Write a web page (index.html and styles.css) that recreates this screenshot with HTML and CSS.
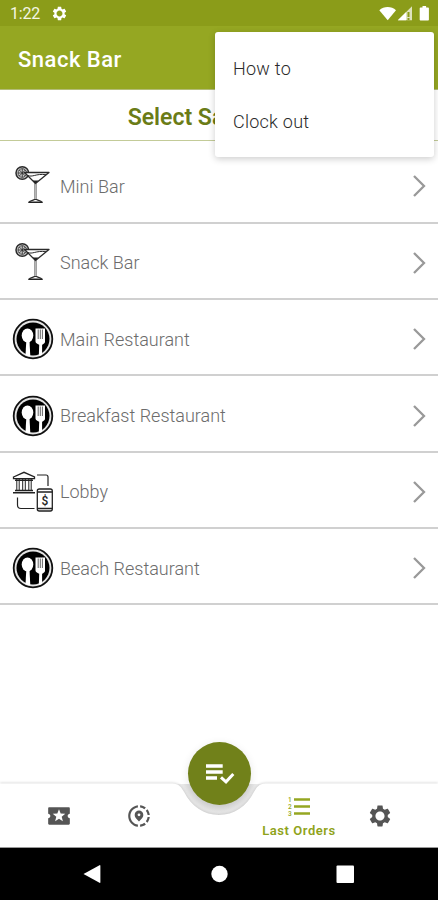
FILE: index.html
```html
<!DOCTYPE html>
<html lang="en">
<head>
<meta charset="utf-8">
<title>Snack Bar</title>
<link rel="stylesheet" href="styles.css">
</head>
<body>
<svg class="defs" width="0" height="0" aria-hidden="true">
  <symbol id="gear" viewBox="0 0 24 24"><path d="M19.14 12.94c.04-.3.06-.61.06-.94 0-.32-.02-.64-.07-.94l2.03-1.58c.18-.14.23-.41.12-.61l-1.92-3.32c-.12-.22-.37-.29-.59-.22l-2.39.96c-.5-.38-1.03-.7-1.62-.94l-.36-2.54c-.04-.24-.24-.41-.48-.41h-3.84c-.24 0-.43.17-.47.41l-.36 2.54c-.59.24-1.13.57-1.62.94l-2.39-.96c-.22-.08-.47 0-.59.22L2.74 8.87c-.12.21-.08.47.12.61l2.03 1.58c-.05.3-.09.63-.09.94s.02.64.07.94l-2.03 1.58c-.18.14-.23.41-.12.61l1.92 3.32c.12.22.37.29.59.22l2.39-.96c.5.38 1.03.7 1.62.94l.36 2.54c.05.24.24.41.48.41h3.84c.24 0 .44-.17.47-.41l.36-2.54c.59-.24 1.13-.56 1.62-.94l2.39.96c.22.08.47 0 .59-.22l1.92-3.32c.12-.22.07-.47-.12-.61l-2.01-1.58zM12 16.2c-2.3 0-4.2-1.9-4.2-4.2s1.9-4.2 4.2-4.2 4.2 1.9 4.2 4.2-1.9 4.2-4.2 4.2z"/></symbol>
  <symbol id="cocktail" viewBox="0 0 42 42">
    <g fill="none" stroke="#2b2b2b" stroke-linejoin="round">
      <circle cx="10.3" cy="8" r="6.3" fill="#ccc" stroke-width="1.5"/>
      <circle cx="10.3" cy="8" r="4.3" stroke-width=".8"/>
      <path d="M10.3 3.7V12.300M6 8h8.600M7.300 5l6 6M13.300 5l-6 6" stroke-width=".8"/>
      <path d="M12.500 7.500H37L23.500 18.500z" fill="#fff" stroke-width="1.300"/>
      <path d="M15.500 10.300c5 2.500 8-2 18.500-.6" stroke-width="1"/>
      <path d="M22.800 18v17M24.200 18v17" stroke="#555" stroke-width=".8"/>
      <path d="M17 37.500c1-2 4-2 5.500-3h2c1.500 1 4.500 1 5.500 3z" stroke-width="1.200"/>
    </g>
    <path d="M20.500 15.500h6l-3 3.300zM16.500 36.500h14v1.500h-14z" fill="#222"/>
  </symbol>
  <symbol id="cutlery" viewBox="0 0 42 42">
    <circle cx="21" cy="21" r="19.300" fill="#e4e4e4" stroke="#111" stroke-width="1.800"/>
    <circle cx="21" cy="21" r="16.500" fill="#000"/>
    <ellipse cx="15.500" cy="17.500" rx="5.800" ry="7" fill="#fff"/>
    <path d="M14.300 23h3.200l.8 15-2.300.2-2.500-1.200z" fill="#fff"/>
    <path d="M23.500 10.500h9.500v13.500c0 1.700-2.500 2.400-2.900 2.700V37l-3.300 1.200.4-11.500C26 26 23.500 25.500 23.500 23.500z" fill="#fff"/>
    <path d="M26.200 11.500v9.500M28.300 11.500v9.500M30.400 11.500v9.500" stroke="#555" stroke-width=".9"/>
  </symbol>
</svg>
<div class="screen">
  <div class="statusbar">
    <span class="clock">1:22</span>
    <svg class="status-gear" fill="#fff"><use href="#gear"/></svg>
    <svg class="signals" viewBox="0 0 52 18" fill="#fff">
      <path d="M.3 5.200C4.800 1 12.500 1 17 5.200L8.700 15.200z"/>
      <path d="M33 1.200V15.300H18.800z" fill-opacity=".72"/>
      <path d="M27 7.200V15.300H18.800z"/>
      <path d="M28.500 7h2v5h-2zM28.500 13h2v2h-2z" fill="#8b9c19"/>
      <path d="M41.500 2.500h2V1h3.600v1.500h2q.8 0 .8.800v11.500q0 .8-.8.800h-7.600q-.8 0-.8-.8V3.300q0-.8.8-.8z"/>
    </svg>
  </div>
  <header class="appbar">Snack Bar</header>
  <h1 class="heading">Select Sales Point</h1>
  <ul class="points">
    <li class="point"><svg class="point-icon"><use href="#cocktail"/></svg><span>Mini Bar</span><svg class="chevron" viewBox="0 0 14 24"><path d="M2 2l10 10L2 22"/></svg></li>
    <li class="point"><svg class="point-icon"><use href="#cocktail"/></svg><span>Snack Bar</span><svg class="chevron" viewBox="0 0 14 24"><path d="M2 2l10 10L2 22"/></svg></li>
    <li class="point"><svg class="point-icon"><use href="#cutlery"/></svg><span>Main Restaurant</span><svg class="chevron" viewBox="0 0 14 24"><path d="M2 2l10 10L2 22"/></svg></li>
    <li class="point"><svg class="point-icon"><use href="#cutlery"/></svg><span>Breakfast Restaurant</span><svg class="chevron" viewBox="0 0 14 24"><path d="M2 2l10 10L2 22"/></svg></li>
    <li class="point"><svg class="point-icon" viewBox="0 0 42 42">
      <g fill="none" stroke="#222" stroke-width="1.300">
        <path d="M1.500 6L12 1.300 22.500 6v1.700h-21z"/>
        <path d="M3 9.200h18M3 19.500h18M1 21.800h22" stroke-width="1.500"/>
        <path d="M4.800 8v12M7.200 8v12M10.700 8v12M13.300 8v12M16.800 8v12M19.200 8v12" stroke-width="1"/>
        <path d="M25 4H34q2 0 2 2V15M5.500 26.500V34q0 3.500 3.500 3.500h13.500" stroke-width="1.200"/>
        <rect x="25.300" y="18" width="15" height="22" rx="2"/>
        <path d="M25.300 21h15M25.300 37.500h15" stroke-width="1.700"/>
      </g>
      <text x="33" y="33.500" text-anchor="middle" class="dollar">$</text>
    </svg><span>Lobby</span><svg class="chevron" viewBox="0 0 14 24"><path d="M2 2l10 10L2 22"/></svg></li>
    <li class="point"><svg class="point-icon"><use href="#cutlery"/></svg><span>Beach Restaurant</span><svg class="chevron" viewBox="0 0 14 24"><path d="M2 2l10 10L2 22"/></svg></li>
  </ul>
  <nav class="tabs">
    <svg class="tabs-shape" viewBox="0 0 438 74">
      <defs><radialGradient id="notch" gradientUnits="userSpaceOnUse" cx="219" cy="3" r="43"><stop offset=".72" stop-color="#dedede"/><stop offset="1" stop-color="#f2f2f2"/></radialGradient></defs>
      <path d="M176 11H262L254 19C247 34 234 43 219 43C204 43 191 34 184 19z" fill="url(#notch)"/>
      <path class="bar-fill" d="M0 10.500H172C179 10.500 181 14 184 19C191 33 204 42 219 42C234 42 247 33 254 19C257 14 259 10.500 266 10.500H438V74H0z"/>
    </svg>
    <a class="tab"><svg class="tab-icon" viewBox="0 0 24 24"><path d="M20 12c0-1.100.9-2 2-2V5c0-.6-.4-1-1-1H3c-.6 0-1 .4-1 1v5c1.100 0 2 .9 2 2s-.9 2-2 2v5c0 .6.4 1 1 1h18c.6 0 1-.4 1-1v-5c-1.100 0-2-.9-2-2zm-4.420 4.800L12 14.500l-3.580 2.300 1.080-4.120-3.290-2.690 4.240-.25L12 5.800l1.540 3.950 4.240.25-3.290 2.690 1.090 4.110z"/></svg></a>
    <a class="tab"><svg class="tab-icon" viewBox="0 0 24 24"><path d="M13.020 19.930v2.020c2.010-.2 3.840-1 5.320-2.210l-1.420-1.430c-1.110.86-2.440 1.440-3.900 1.620zM4.030 12c0-4.050 3.030-7.410 6.950-7.930V2.050C5.950 2.580 2.030 6.840 2.030 12c0 5.160 3.920 9.420 8.950 9.950v-2.020c-3.920-.52-6.950-3.880-6.950-7.930zM19.950 11h2.020c-.2-2.010-1-3.840-2.210-5.320l-1.430 1.430c.86 1.100 1.440 2.430 1.620 3.890zM18.340 4.260c-1.480-1.210-3.320-2.010-5.320-2.210v2.020c1.460.18 2.790.76 3.900 1.620l1.420-1.430zM18.330 16.900l1.430 1.420c1.210-1.480 2.010-3.310 2.210-5.320h-2.020c-.18 1.460-.76 2.790-1.620 3.900zM16 11.100C16 8.610 14.100 7 12 7s-4 1.610-4 4.100c0 1.660 1.330 3.630 4 5.900 2.670-2.270 4-4.240 4-5.900zm-4 1.100a1.300 1.300 0 1 1 0-2.600 1.300 1.300 0 0 1 0 2.600z"/></svg></a>
    <span class="tab-gap"></span>
    <a class="tab tab-active"><svg class="list-icon" viewBox="0 0 22 20"><path d="M6 1.300h16v2.400H6zM6 8.300h16v2.400H6zM6 15.300h16v2.400H6z"/><text x="0" y="5">1</text><text x="0" y="12">2</text><text x="0" y="19">3</text></svg><span>Last Orders</span></a>
    <a class="tab"><svg class="tab-icon"><use href="#gear"/></svg></a>
    <button class="fab"><svg viewBox="0 0 30 24"><path d="M1 2.300h16.700v3.400H1zM1 8.300h16.700v3.400H1zM1 14.300h11v3.400H1z"/><path d="M16 15.300l5 4.500 7.300-7.800" fill="none" stroke="#fff" stroke-width="3"/></svg></button>
  </nav>
  <div class="sysnav">
    <svg viewBox="0 0 438 52"><path d="M83.500 26L99.500 17.200q.9-.4.900.7v16.300q0 1-.9.600z"/><circle cx="219.500" cy="26" r="8.200"/><rect x="336.500" y="17.500" width="17.500" height="17.500" rx="1"/></svg>
  </div>
  <div class="menu">
    <div class="menu-item">How to</div>
    <div class="menu-item">Clock out</div>
  </div>
</div>
</body>
</html>
```
FILE: styles.css
```css
* { box-sizing: border-box; }
body { margin: 0; font-family: Roboto, sans-serif; background: #fff; }
.defs { position: absolute; }
.screen {
  position: relative;
  width: 438px;
  height: 900px;
  display: flex;
  flex-direction: column;
  overflow: hidden;
}
.statusbar {
  height: 26px;
  flex: none;
  display: flex;
  align-items: center;
  padding: 2px 7px 0 10px;
  background: #8b9c19;
  color: #f4f6e4;
}
.clock { font-size: 16px; line-height: 24px; letter-spacing: -.2px; }
.status-gear { width: 17px; height: 17px; margin: -1px 0 0 11px; }
.signals { width: 52px; height: 18px; margin-left: auto; margin-top: -1px; }
.appbar {
  height: 64px;
  flex: none;
  padding-left: 18px;
  background: #95a722;
  color: #fff;
  font-size: 22px;
  font-weight: 500;
  letter-spacing: .5px;
  line-height: 67px;
  border-bottom: 1px solid #b3bc78;
}
.heading {
  height: 51px;
  flex: none;
  margin: 0;
  padding-left: 4px;
  text-align: center;
  color: #6b7c17;
  font-size: 23px;
  font-weight: 600;
  line-height: 56px;
  border-bottom: 1px solid #c3cb98;
}
.points {
  list-style: none;
  margin: 0;
  padding: 6px 0 0;
  flex: 1;
}
.point {
  height: 76.3px;
  display: flex;
  align-items: center;
  padding: 4px 12px 0;
  border-bottom: 2px solid #d0d0d0;
  color: #6c6c6c;
  font-size: 18px;
  font-weight: 300;
}
.point:first-child { height: 76.8px; }
.point-icon { width: 42px; height: 42px; margin-right: 6px; }
.dollar { font: 500 12px Roboto, sans-serif; fill: #222; }
.chevron {
  width: 14px;
  height: 24px;
  margin-left: auto;
  fill: none;
  stroke: #999;
  stroke-width: 2.3;
}
.tabs {
  position: relative;
  height: 64px;
  flex: none;
  display: grid;
  grid-template-columns: 99px 80px 80px 80px 99px;
}
.tabs-shape { position: absolute; left: 0; top: -10px; width: 438px; height: 74px; }
.bar-fill { fill: #fff; filter: drop-shadow(0 -1px 1px rgba(0, 0, 0, .13)); }
.tab {
  position: relative;
  display: flex;
  flex-direction: column;
  align-items: center;
  justify-content: center;
  fill: #555;
}
.tab:nth-of-type(1) { padding-left: 18px; }
.tab:nth-of-type(4) { padding-right: 18px; }
.tab-icon { width: 26px; height: 26px; margin-top: 2px; }
.tab-active { fill: #95a722; color: #8fa31a; font-size: 13px; font-weight: 600; letter-spacing: .55px; white-space: nowrap; }
.tab-active span { line-height: 16px; margin-top: 6px; }
.list-icon { width: 22px; height: 20px; margin-top: 6px; overflow: visible; }
.list-icon text { font: 500 6.5px Roboto, sans-serif; letter-spacing: 0; }
.fab {
  position: absolute;
  left: 188px;
  top: -41px;
  width: 63px;
  height: 63px;
  padding: 0;
  border: 0;
  border-radius: 50%;
  background: #71811a;
  display: grid;
  place-items: center;
  box-shadow: 0 2px 8px rgba(0, 0, 0, .1);
}
.fab svg { width: 30px; height: 24px; fill: #fff; }
.sysnav { height: 53px; flex: none; background: #000; border-top: 1px solid #999; }
.sysnav svg { display: block; width: 438px; height: 52px; fill: #fff; }
.menu {
  position: absolute;
  top: 32px;
  left: 215px;
  width: 219px;
  height: 125px;
  padding: 10px 18px;
  background: #fff;
  border-radius: 3px;
  box-shadow: 0 2px 7px rgba(0, 0, 0, .2);
  color: #2a2a2a;
  font-size: 18px;
}
.menu-item { height: 53px; line-height: 54px; font-weight: 300; letter-spacing: .25px; }
```
